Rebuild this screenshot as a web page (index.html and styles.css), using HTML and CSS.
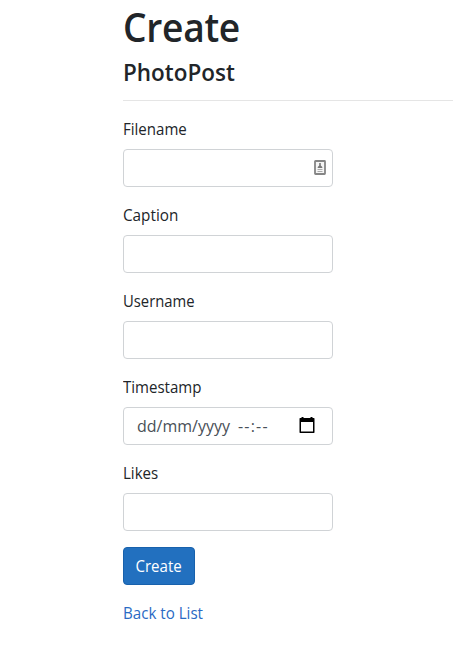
FILE: index.html
```html
<!DOCTYPE html>
<html lang="en">
<head>
<meta charset="utf-8">
<title>Create</title>
<link rel="stylesheet" href="styles.css">
</head>
<body>
<main class="page">
  <h1>Create</h1>
  <h4>PhotoPost</h4>
  <hr>
  <form class="form">
    <div class="group">
      <label>Filename</label>
      <div class="control control-icon">
        <svg width="12" height="16" viewBox="0 0 12 16"><rect x="1" y="1" width="10" height="13" rx=".5" fill="#f5f5f5" stroke="#858585" stroke-width="1.8"/><path d="M5.200 3h1.600v2.500L8.300 7v1H3.700V7l1.500-1.500z" fill="#777"/><path d="M3.500 9.500h5M3.500 11.500h5" stroke="#aaa"/></svg>
      </div>
    </div>
    <div class="group">
      <label class="caption">Caption</label>
      <div class="control"></div>
    </div>
    <div class="group">
      <label class="username">Username</label>
      <div class="control"></div>
    </div>
    <div class="group">
      <label>Timestamp</label>
      <div class="control control-date">
        <span class="placeholder"><span>dd/mm/yyyy</span><span class="time">--:--</span></span>
        <svg class="calendar" width="16" height="18" viewBox="0 0 16 18"><path fill-rule="evenodd" d="M2.500 1h2v1h7V1h2v1H15l.5 .5V16.500l-.5.500H1l-.5-.5V2.500L1 2h1.500zM2 6v9.500h12V6z" fill="#000"/></svg>
      </div>
    </div>
    <div class="group">
      <label>Likes</label>
      <div class="control"></div>
    </div>
    <button type="button" class="btn"><span class="btn-text">Create</span></button>
  </form>
  <a class="back" href="#">Back to List</a>
</main>
</body>
</html>
```
FILE: styles.css
```css
* { box-sizing: border-box; }
body { margin: 0; background: #fff; color: #212529; font: 400 16px/24px "Open Sans", "Noto Sans", sans-serif; }
.page { padding: 0 0 0 123px; }
h1, h4, label, .back { display: block; width: max-content; transform-origin: left; }
h1 { margin: 0 0 4px; font-size: 39px; line-height: 53px; font-weight: 550; letter-spacing: -.3px; transform: scaleX(.953); }
h4 { margin: 0 0 14px; font-size: 24px; line-height: 29px; font-weight: 540; transform: scaleX(.937); }
hr { margin: 0 0 16px; border: 0; border-top: 1px solid #e5e5e5; }
.form { width: 210px; }
.group { margin-bottom: 16px; }
label { height: 24px; margin-bottom: 8px; transform: scaleX(.94); }
.caption { transform: scaleX(.955); }
.username { transform: scaleX(.925); }
.control { display: flex; align-items: center; width: 210px; height: 38px; border: 1px solid #d0d3d6; border-radius: 4px; background: #fff; }
.control-icon { justify-content: flex-end; padding-right: 6px; }
.control-date { justify-content: space-between; padding: 0 17px 0 13px; color: #495057; }
.placeholder { display: flex; gap: 8px; }
.time { letter-spacing: 1.2px; }
.calendar { margin-top: -2px; }
.btn { display: block; width: 72px; height: 38px; padding: 0; border: 1px solid #1861ac; border-radius: 4px; background: #2270bf; color: #fff; font: inherit; }
.btn-text { display: inline-block; transform: scaleX(.94); }
.back { margin-top: 16px; color: #2a6ac4; text-decoration: none; transform: scaleX(.945); }
```
